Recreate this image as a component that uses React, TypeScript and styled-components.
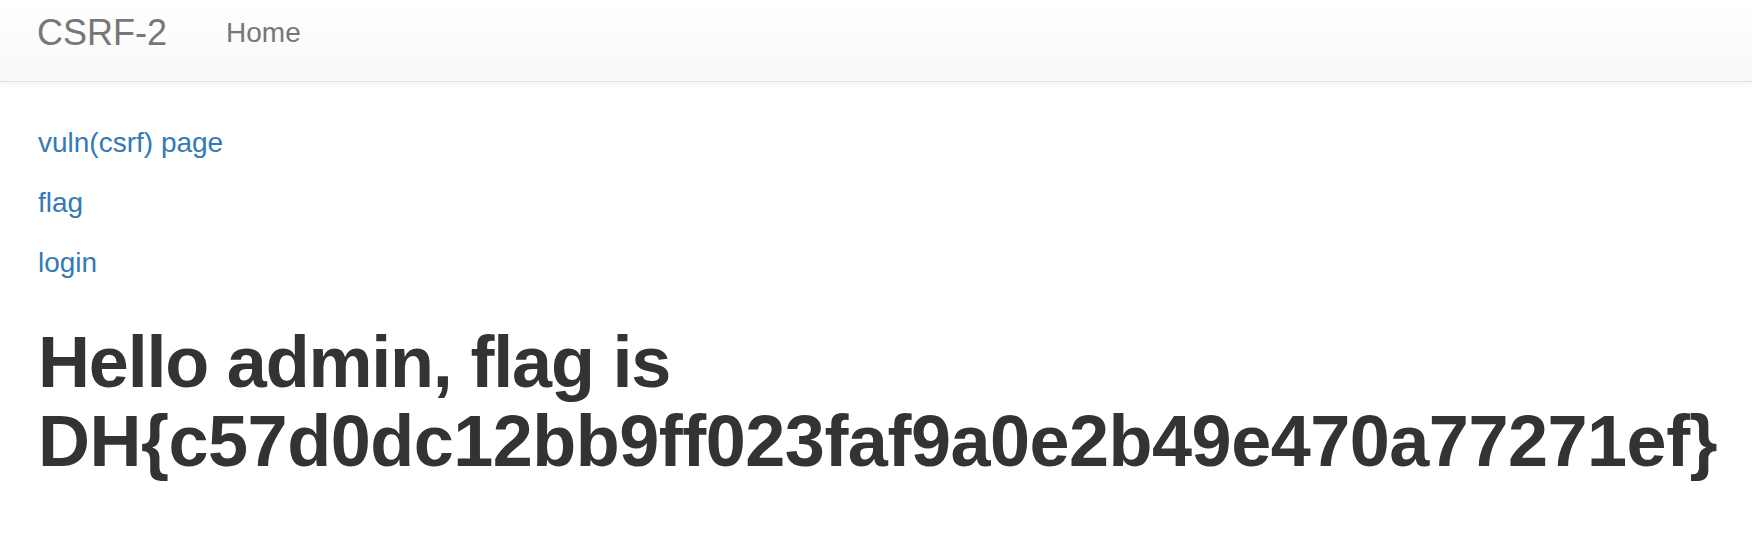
import React from "react";
import styled, { createGlobalStyle } from "styled-components";

const GlobalStyle = createGlobalStyle`
  html, body {
    margin: 0;
    padding: 0;
    background: #ffffff;
    font-family: "Liberation Sans", Arial, Helvetica, sans-serif;
    color: #333333;
  }
`;

const Navbar = styled.nav`
  box-sizing: border-box;
  height: 82px;
  border-bottom: 1px solid #e2e2e2;
  background: linear-gradient(to bottom, #ffffff 0%, #f8f8f8 100%);
  box-shadow: 0 1px 8px rgba(0, 0, 0, 0.07);
  display: flex;
  align-items: flex-start;
  padding: 13px 37px 0;
  gap: 59px;
`;

const Brand = styled.a`
  font-size: 36px;
  line-height: 40px;
  color: #777777;
  text-decoration: none;
`;

const NavLink = styled.a`
  font-size: 28px;
  line-height: 40px;
  color: #777777;
  text-decoration: none;
`;

const Container = styled.main`
  padding: 41px 38px 0;
`;

const LinkLine = styled.p`
  margin: 0 0 20px;
  font-size: 28px;
  line-height: 40px;
`;

const TextLink = styled.a`
  color: #337ab7;
  text-decoration: none;
`;

const Heading = styled.h1`
  margin: 40px 0 20px;
  font-size: 72px;
  line-height: 1.1;
  font-weight: 700;
  letter-spacing: -0.5px;
  color: #333333;
`;

const Greeting = styled.span`
  letter-spacing: -1.2px;
`;

export default function App() {
  return (
    <>
      <GlobalStyle />
      <Navbar>
        <Brand href="#">CSRF-2</Brand>
        <NavLink href="#">Home</NavLink>
      </Navbar>
      <Container>
        <LinkLine>
          <TextLink href="#">vuln(csrf) page</TextLink>
        </LinkLine>
        <LinkLine>
          <TextLink href="#">flag</TextLink>
        </LinkLine>
        <LinkLine>
          <TextLink href="#">login</TextLink>
        </LinkLine>
        <Heading>
          <Greeting>Hello admin, flag is</Greeting> DH{"{"}c57d0dc12bb9ff023faf9a0e2b49e470a77271ef{"}"}
        </Heading>
      </Container>
    </>
  );
}
